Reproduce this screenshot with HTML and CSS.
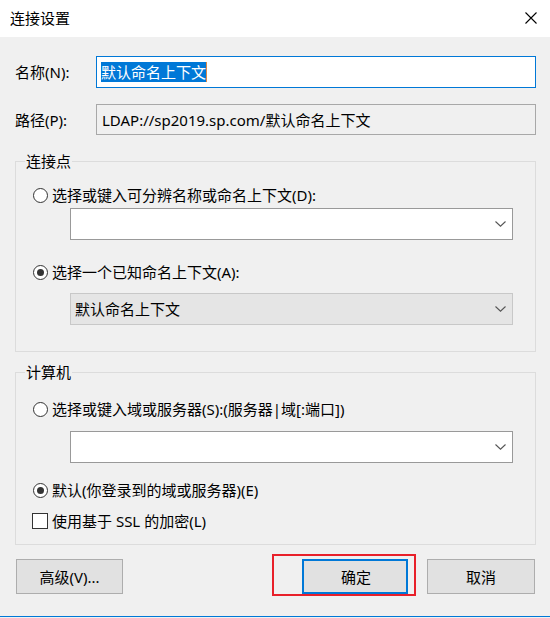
FILE: index.html
```html
<!DOCTYPE html>
<html lang="zh-CN">
<head>
<meta charset="utf-8">
<title>连接设置</title>
<link rel="stylesheet" href="styles.css">
</head>
<body>
<div class="window">
  <div class="titlebar">
    <span class="title">连接设置</span>
    <svg class="close" width="12" height="12" viewBox="0 0 12 12"><path d="M0.5 0.5 L11.5 11.5 M11.5 0.5 L0.5 11.5" stroke="#000" stroke-width="1.1" fill="none"/></svg>
  </div>
  <div class="dialog">
    <div class="field-row first">
      <span class="label">名称(N):</span>
      <div class="textbox focused"><span class="selected">默认命名上下文</span><span class="caret"></span></div>
    </div>
    <div class="field-row second">
      <span class="label">路径(P):</span>
      <div class="textbox readonly">LDAP://sp2019.sp.com/默认命名上下文</div>
    </div>

    <fieldset class="group group-one">
      <legend>连接点</legend>
      <div class="option"><span class="radio"></span><span>选择或键入可分辨名称或命名上下文(D):</span></div>
      <div class="combo combo-a">
        <span class="combo-text"></span>
        <svg class="chev" width="11" height="6" viewBox="0 0 11 6"><path d="M0.5 0.5 L5.5 5.2 L10.5 0.5" stroke="#555" stroke-width="1.1" fill="none"/></svg>
      </div>
      <div class="option opt2"><span class="radio checked"></span><span>选择一个已知命名上下文(A):</span></div>
      <div class="combo combo-b disabled">
        <span class="combo-text">默认命名上下文</span>
        <svg class="chev" width="11" height="6" viewBox="0 0 11 6"><path d="M0.5 0.5 L5.5 5.2 L10.5 0.5" stroke="#555" stroke-width="1.1" fill="none"/></svg>
      </div>
    </fieldset>

    <fieldset class="group group-two">
      <legend>计算机</legend>
      <div class="option"><span class="radio"></span><span>选择或键入域或服务器(S):(服务器|域[:端口])</span></div>
      <div class="combo combo-c">
        <span class="combo-text"></span>
        <svg class="chev" width="11" height="6" viewBox="0 0 11 6"><path d="M0.5 0.5 L5.5 5.2 L10.5 0.5" stroke="#555" stroke-width="1.1" fill="none"/></svg>
      </div>
      <div class="option opt-default"><span class="radio checked"></span><span>默认(你登录到的域或服务器)(E)</span></div>
      <div class="option opt-check"><span class="checkbox"></span><span>使用基于 SSL 的加密(L)</span></div>
    </fieldset>

    <div class="buttons">
      <div class="btn advanced">高级(V)...</div>
      <div class="spacer"></div>
      <div class="btn ok">确定</div>
      <div class="btn cancel">取消</div>
      <div class="highlight"></div>
    </div>
  </div>
  <div class="bottom-line"></div>
</div>
</body>
</html>
```

FILE: styles.css
```css
* { box-sizing: border-box; }
html, body {
  margin: 0;
  padding: 0;
}
body {
  width: 550px;
  height: 618px;
  overflow: hidden;
  font-family: "Noto Sans", "Noto Sans CJK SC", sans-serif;
  font-size: 15px;
  line-height: 20px;
  color: #000;
  background: #f0f0f0;
}
.window {
  width: 550px;
  height: 618px;
  display: flex;
  flex-direction: column;
}
.titlebar {
  height: 37px;
  background: #fff;
  display: flex;
  align-items: center;
  justify-content: space-between;
  padding: 0 13px 1px 10px;
  flex: none;
}
.title {
  font-size: 15px;
}
.close {
  display: block;
}
.dialog {
  flex: 1;
  background: #f0f0f0;
  padding: 0 14px 0 15px;
  display: flex;
  flex-direction: column;
  position: relative;
}
.field-row {
  display: flex;
  align-items: center;
}
.field-row.first { margin-top: 19px; }
.field-row.second { margin-top: 16px; }
.label {
  width: 81px;
  flex: none;
}
.textbox {
  flex: 1;
  height: 32px;
  display: flex;
  align-items: center;
  padding-left: 4px;
  background: #fff;
  border: 1px solid #7a7a7a;
  white-space: nowrap;
}
.textbox.focused {
  border-color: #0078d7;
}
.textbox.readonly {
  height: 31px;
  background: #f0f0f0;
  border-color: #a8a8a8;
  padding-left: 5px;
}
.selected {
  background: #0078d7;
  color: #fff;
  line-height: 20px;
}
.caret {
  width: 1px;
  height: 20px;
  background: #d9884a;
}
.group {
  margin: 0;
  border: 1px solid #dcdcdc;
  padding: 0 0 0 17px;
  min-width: 0;
}
.group legend {
  margin-left: -8px;
  padding: 0 1px;
  line-height: 20px;
}
.group-one {
  margin-top: 16px;
  padding-top: 14px;
  padding-bottom: 26px;
}
.group-two {
  margin-top: 10px;
  padding-top: 17px;
  padding-bottom: 13px;
}
.option {
  display: flex;
  align-items: center;
  height: 20px;
  gap: 4px;
  white-space: nowrap;
}
.opt2 { margin-top: 22px; }
.opt-default { margin-top: 17px; }
.opt-check { margin-top: 11px; }
.radio {
  width: 15px;
  height: 15px;
  border: 1px solid #333;
  border-radius: 50%;
  background: #fff;
  flex: none;
  display: flex;
  align-items: center;
  justify-content: center;
}
.radio.checked::after {
  content: "";
  width: 7px;
  height: 7px;
  border-radius: 50%;
  background: #333;
}
.checkbox {
  width: 16px;
  height: 16px;
  border: 1px solid #333;
  background: #fff;
  flex: none;
  margin-left: -1px;
}
.combo {
  margin-left: 37px;
  margin-right: 22px;
  height: 32px;
  background: #fff;
  border: 1px solid #999;
  display: flex;
  align-items: center;
  justify-content: space-between;
  padding: 0 6px 0 4px;
}
.combo-a { margin-top: 3px; }
.combo-b { margin-top: 11px; }
.combo-c { margin-top: 12px; }
.combo.disabled {
  background: #e5e5e5;
  border-color: #c8c8c8;
}
.chev { display: block; flex: none; }
.buttons {
  margin-top: 14px;
  display: flex;
  align-items: flex-start;
  position: relative;
}
.btn {
  height: 35px;
  background: #e1e1e1;
  border: 1px solid #adadad;
  display: flex;
  align-items: center;
  justify-content: center;
  flex: none;
}
.advanced {
  width: 107px;
  margin-left: 1px;
}
.spacer { flex: 1; }
.ok {
  width: 106px;
  border: 2px solid #0078d7;
  padding-left: 2px;
}
.cancel {
  width: 108px;
  margin-left: 19px;
  margin-right: 1px;
}
.highlight {
  position: absolute;
  left: 257px;
  top: -5px;
  width: 144px;
  height: 42px;
  border: 2px solid #e8202a;
  pointer-events: none;
}
.bottom-line {
  height: 1px;
  background: #0078d7;
  margin-bottom: 1px;
  flex: none;
}
```
